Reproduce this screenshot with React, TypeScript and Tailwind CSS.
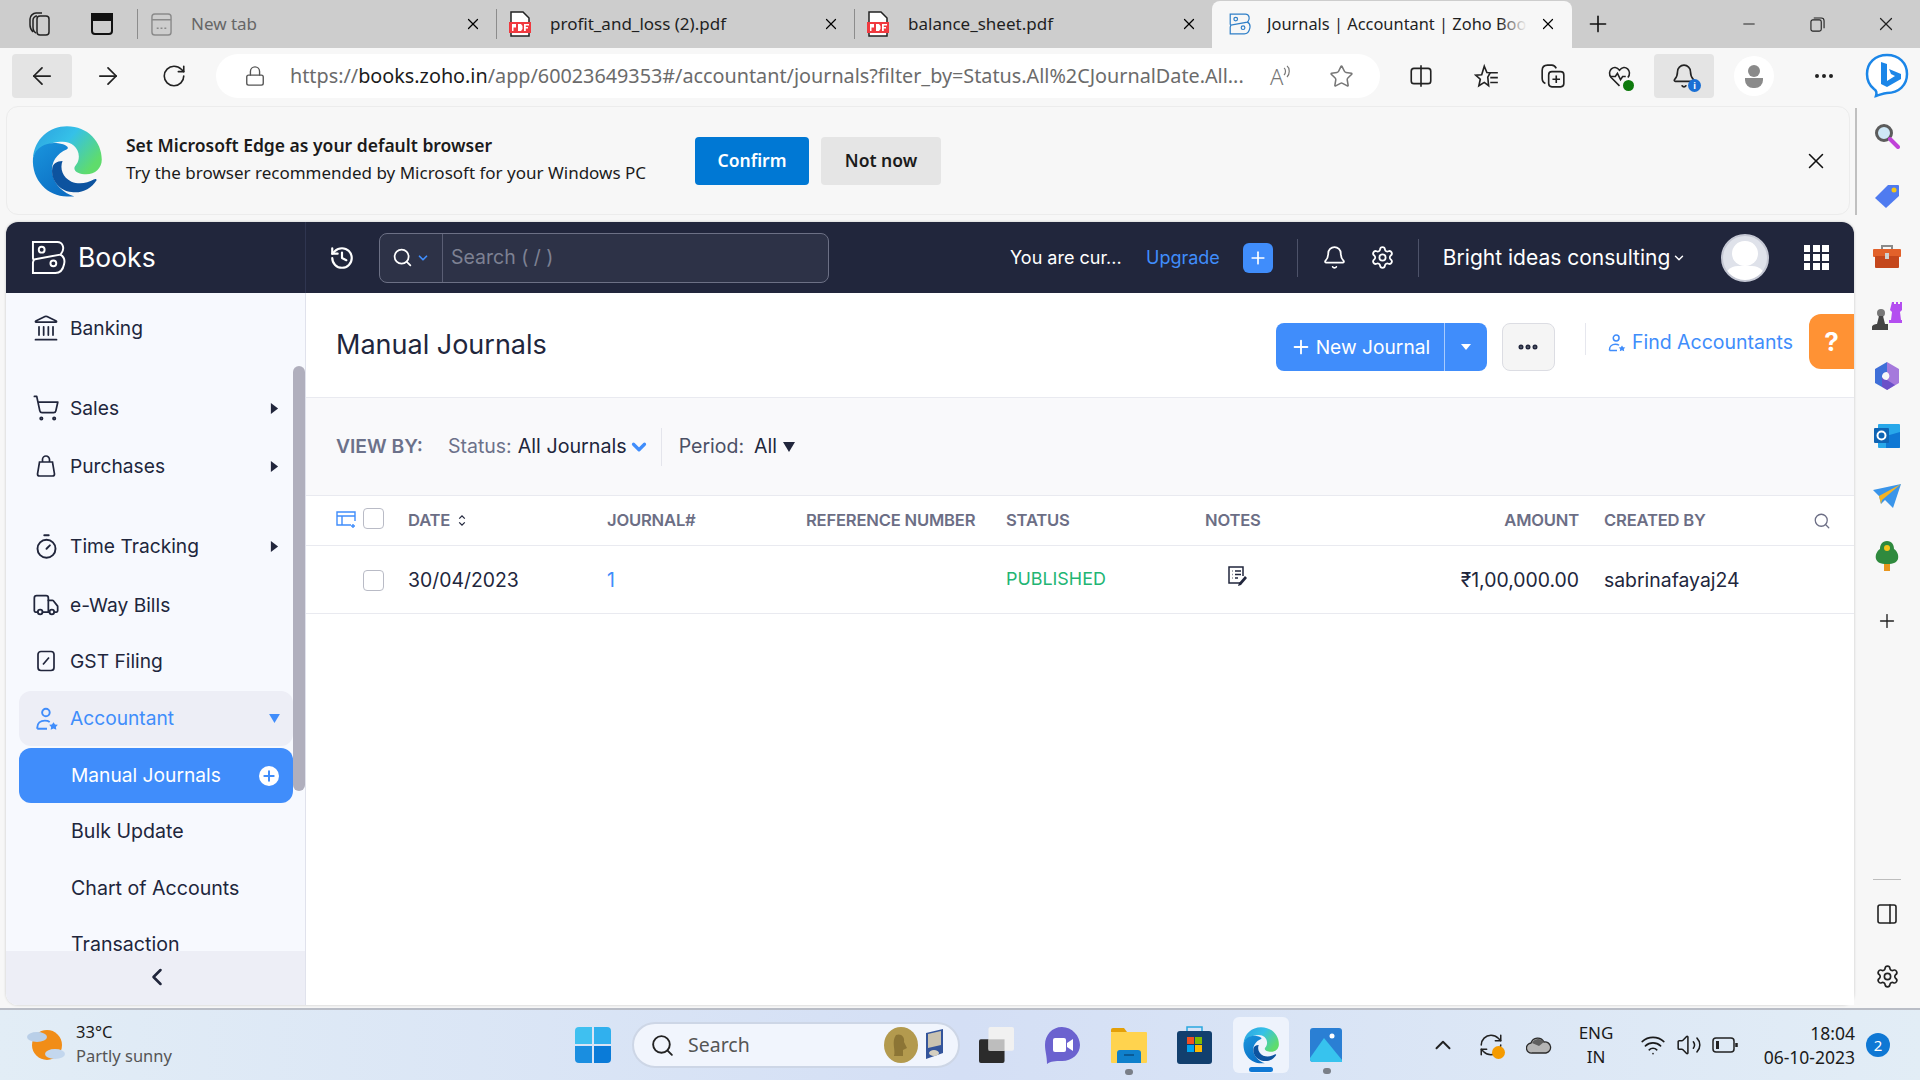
import React from "react";
import {
  ArrowLeft,
  ArrowRight,
  RotateCw,
  Lock,
  Star,
  Ellipsis,
  X,
  Plus,
  Minus,
  Landmark,
  ShoppingCart,
  Timer,
  Truck,
  Search,
  ChevronDown,
  ChevronLeft,
  ChevronUp,
  Bell,
  Settings,
  History,
  Wifi,
  Volume2,
  RefreshCw,
  PanelRight,
} from "lucide-react";

const EdgeLogo = ({ className }: { className: string }) => (
  <svg viewBox="0 0 100 100" className={className}>
    <defs>
      <linearGradient id="edgeTop" x1="0" y1="0" x2="1" y2="0.6">
        <stop offset="0" stopColor="#2b9fe0" />
        <stop offset="0.5" stopColor="#35c1e8" />
        <stop offset="1" stopColor="#5fdc6c" />
      </linearGradient>
      <linearGradient id="edgeMid" x1="0" y1="0" x2="0.6" y2="1">
        <stop offset="0" stopColor="#1a95dd" />
        <stop offset="1" stopColor="#0c6fc4" />
      </linearGradient>
    </defs>
    <path d="M4 46C6 20 26 3 50 3c28 0 47 21 47 45 0 12-9 20-21 20-8 0-16-3-16-8 0-4 6-6 6-16 0-12-10-20-22-20C26 24 8 34 4 46Z" fill="url(#edgeTop)" />
    <path d="M4 46c4-16 20-22 34-20 10 1 16 6 12 8-14 6-22 18-20 32 2 16 16 28 30 32h-10C24 98 2 76 4 46Z" fill="url(#edgeMid)" />
    <path d="M30 60c-2 16 10 30 26 32 14 2 26-4 34-16 0-2-2-2-4-1-8 5-20 7-30 3-12-6-16-18-12-28-8 0-13 4-14 10Z" fill="#0d539f" />
  </svg>
);

const BooksLogo = ({ className, color }: { className: string; color: string }) => (
  <svg viewBox="0 0 36 36" fill="none" stroke={color} strokeWidth="2" className={className}>
    <path d="M2 2h25c6 0 8 7 4 12l-1 1L3 20c-1 0-1-1-1-2V2Z" />
    <path d="M30 15c4 2 5 6 4 10-1 5-4 9-9 9H2V23l1-3" />
    <circle cx="11" cy="10" r="3" />
    <circle cx="23" cy="24" r="3" />
  </svg>
);

const PdfIcon = () => (
  <svg viewBox="0 0 22 26" className="w-[22px] h-[26px]">
    <path d="M2 1h12l6 6v18H2Z" fill="#fff" stroke="#222" strokeWidth="1.5" />
    <rect x="0" y="11" width="22" height="11" fill="#f0393f" />
    <path d="M3 13h4v3.5H4.5V20H3Zm6 0h3l1.5 2v3l-1.500 2H9Zm6 0h5v1.500h-3.200V16H19v1.500h-2.200V20H15Z" fill="#fff" />
  </svg>
);

const Tab = ({ w, icon, label, muted }: { w: string; icon: React.ReactNode; label: string; muted?: boolean }) => (
  <div className={`flex items-center h-full pl-3 pr-[14px] ${w}`}>
    <div className="w-[22px] flex justify-center shrink-0">{icon}</div>
    <span className={`ml-[19px] text-[17px] flex-1 whitespace-nowrap ${muted ? "text-[#666]" : "text-[#1f1f1f]"}`}>{label}</span>
    <X className="w-[18px] h-[18px] text-black" strokeWidth={1.6} />
  </div>
);

const TabSep = () => <div className="w-px h-[30px] bg-[#8c8c8c] shrink-0" />;

const ToolIcon = ({ children }: { children: React.ReactNode }) => (
  <div className="w-[66px] h-11 flex items-center justify-center shrink-0">{children}</div>
);

const RailIcon = ({ children }: { children: React.ReactNode }) => (
  <div className="h-[60px] flex items-center justify-center">{children}</div>
);

const Caret = () => (
  <svg viewBox="0 0 10 12" className="w-[9px] h-[11px]">
    <path d="M1 0l8 6-8 6Z" fill="#21263c" />
  </svg>
);

function GstIcon() {
  return (
    <svg viewBox="0 0 24 24" fill="none" stroke="currentColor" strokeWidth="1.700" className="w-[26px] h-[26px]">
      <rect x="4" y="2.500" width="16" height="19" rx="3" />
      <path d="M9 15.500l6-7M9.500 9h.01M14.500 15h.01" />
    </svg>
  );
}

function BagIcon() {
  return (
    <svg viewBox="0 0 24 24" fill="none" stroke="currentColor" strokeWidth="1.700" className="w-[26px] h-[26px]">
      <path d="M5.500 8h13l2 12a2 2 0 0 1-2 2H5.500a2 2 0 0 1-2-2Z" />
      <path d="M8.500 8V5.500a3.500 3.500 0 0 1 7 0V8" />
    </svg>
  );
}

const navRows = [
  { label: "Banking", icon: <Landmark className="shrink-0 w-[28px] h-[28px]" strokeWidth={1.5} />, cls: "mt-[6px]" },
  { label: "Sales", icon: <ShoppingCart className="shrink-0 w-[28px] h-[28px]" strokeWidth={1.5} />, cls: "mt-[24px]", caret: true },
  { label: "Purchases", icon: <BagIcon />, cls: "mt-[2px]", caret: true },
  { label: "Time Tracking", icon: <Timer className="shrink-0 w-[27px] h-[27px]" strokeWidth={1.7} />, cls: "mt-[24px]", caret: true },
  { label: "e-Way Bills", icon: <Truck className="shrink-0 w-[28px] h-[28px]" strokeWidth={1.5} />, cls: "mt-[3px]" },
  { label: "GST Filing", icon: <GstIcon />, cls: "mt-[0px]" },
];

const AccountantIcon = ({ className }: { className: string }) => (
  <svg viewBox="0 0 24 24" fill="none" stroke="#408dfb" strokeWidth="1.800" className={className}>
    <circle cx="11" cy="6" r="3.500" />
    <path d="M3 21v-1c0-4 3-6.500 7-6.500 2 0 3.500.5 4.500 1.200M3 21h9" />
    <path d="M18 15l1.400 2 2.600.4-1.800 1.900.4 2.700-2.600-1.200-2.600 1.200.4-2.700-1.800-1.900 2.600-.4Z" fill="#408dfb" stroke="none" />
  </svg>
);

const Sidebar = () => (
  <div className="relative w-[300px] shrink-0 flex flex-col bg-[#f7f9fe] border-r border-[#e0e2ec] rounded-bl-xl overflow-hidden">
    <div className="flex-1 overflow-hidden pt-[1px] text-[19.200px] text-[#21263c]">
      {navRows.map((r) => (
        <div key={r.label} className={`flex items-center h-[56px] pl-[28px] pr-[26px] ${r.cls}`}>
          <div className="w-6 flex justify-center">{r.icon}</div>
          <span className="ml-[12px] flex-1">{r.label}</span>
          {r.caret && <Caret />}
        </div>
      ))}
      <div className="flex items-center h-[55px] ml-[13px] mr-[12px] mt-[2px] pl-[15px] pr-[13px] rounded-xl bg-[#edeef6] text-[#408dfb]">
        <AccountantIcon className="w-[26px] h-[26px]" />
        <span className="ml-[10px] flex-1">Accountant</span>
        <svg viewBox="0 0 12 10" className="w-[11px] h-[9px]">
          <path d="M0 0h12L6 10Z" fill="#408dfb" />
        </svg>
      </div>
      <div className="flex items-center h-[55px] ml-[13px] mr-[12px] mt-[2px] pl-[52px] pr-[14px] rounded-xl bg-[#408dfb] text-white">
        <span className="flex-1">Manual Journals</span>
        <div className="w-5 h-5 rounded-full bg-white flex items-center justify-center">
          <Plus className="w-4 h-4 text-[#408dfb]" strokeWidth={3} />
        </div>
      </div>
      <div className="h-[56px] mt-[1px] pl-[65px] flex items-center text-[19.600px]">Bulk Update</div>
      <div className="h-[56px] mt-[1px] pl-[65px] flex items-center text-[19.600px]">Chart of Accounts</div>
      <div className="h-[56px] pl-[65px] flex items-center text-[19.600px]">Transaction</div>
    </div>
    <div className="h-[54px] shrink-0 bg-[#edeef6] flex items-center justify-center pl-[3px] pb-[2px] z-10">
      <ChevronLeft className="w-7 h-7 text-[#21263c]" strokeWidth={2.2} />
    </div>
    <div className="absolute right-0 top-[73px] w-[12px] h-[425px] rounded-full bg-[#b0afbd]" />
  </div>
);

const TopBar = () => (
  <div className="h-[71px] shrink-0 bg-[#21263c] rounded-t-xl flex items-center text-white">
    <div className="w-[300px] h-full shrink-0 flex items-center pl-[25px] border-r border-[#2f3550]">
      <BooksLogo className="w-[35px] h-[35px]" color="#fff" />
      <span className="ml-[12px] text-[26.500px] mt-[1px]">Books</span>
    </div>
    <History className="ml-[23px] w-[26px] h-[26px]" strokeWidth={2} />
    <div className="ml-[24px] w-[450px] h-[50px] rounded-lg border border-[#6c7085] bg-[#2d3247] flex items-center">
      <div className="w-[63px] h-full flex items-center justify-center gap-[3px] border-r border-[#5a5e74]">
        <Search className="w-[21px] h-[21px]" strokeWidth={2} />
        <ChevronDown className="w-[14px] h-[14px] text-[#408dfb]" strokeWidth={3} />
      </div>
      <span className="ml-[8px] text-[19.500px] text-[#7d8193]">Search ( / )</span>
    </div>
    <span className="ml-[181px] w-[136px] text-[18px] whitespace-nowrap">You are cur...</span>
    <span className="text-[18px] text-[#408dfb]">Upgrade</span>
    <div className="ml-[23px] w-[30px] h-[30px] rounded-md bg-[#408dfb] flex items-center justify-center">
      <Plus className="w-5 h-5 text-white" strokeWidth={2} />
    </div>
    <div className="ml-[24px] w-px h-[38px] bg-[#4d5269]" />
    <Bell className="ml-[24px] w-[25px] h-[25px]" strokeWidth={1.7} />
    <Settings className="ml-[23px] w-[25px] h-[25px]" strokeWidth={1.7} />
    <div className="ml-[23px] w-px h-[38px] bg-[#4d5269]" />
    <span className="ml-[24px] text-[21px] whitespace-nowrap w-[229px]">Bright ideas consulting</span>
    <ChevronDown className="w-[14px] h-[14px]" strokeWidth={2.5} />
    <div className="ml-[35px] w-[48px] h-[48px] rounded-full bg-[#dfe2ea] border-2 border-[#c5c8d4] overflow-hidden flex flex-col items-center">
      <div className="mt-[5px] w-[26px] h-[27px] rounded-full bg-white" />
      <div className="w-[42px] h-[14px] rounded-t-full bg-white" />
    </div>
    <div className="ml-[35px] grid grid-cols-3 gap-[2.500px] w-[25px]">
      {Array.from({ length: 9 }).map((_, i) => (
        <div key={i} className="w-[6.500px] h-[6.500px] bg-white" />
      ))}
    </div>
  </div>
);

const Checkbox = () => <div className="w-[21px] h-[21px] rounded border border-[#b9bbc6] bg-white shrink-0" />;

const tableCols = "grid grid-cols-[102px_199px_199px_200px_199px_195px_179px_25px_206px_1fr]";

const MainPanel = () => (
  <div className="flex-1 flex flex-col bg-white min-w-0 relative">
    <div className="h-[105px] shrink-0 flex items-center border-b border-[#e9eaf0] pl-[30px]">
      <h1 className="text-[27px] text-[#21263c] mt-[1px]">Manual Journals</h1>
      <div className="ml-auto flex items-center pr-[61px] mt-[4px]">
        <div className="flex h-12 w-[211px] rounded-lg bg-[#408dfb] text-white items-center text-[19.200px]">
          <div className="w-[169px] h-full flex items-center justify-center border-r border-[#a8cbfd]">
            <Plus className="w-[22px] h-[22px]" strokeWidth={2} />
            <span className="ml-[4px]">New Journal</span>
          </div>
          <div className="flex-1 flex justify-center">
            <svg viewBox="0 0 10 6" className="w-[10px] h-[6px]">
              <path d="M0 0h10L5 6Z" fill="#fff" />
            </svg>
          </div>
        </div>
        <div className="ml-[15px] w-[53px] h-12 rounded-lg border border-[#dcdde3] bg-[#f5f5f5] flex items-center justify-center">
          <Ellipsis className="w-6 h-6 text-[#21263c]" strokeWidth={3} />
        </div>
        <div className="ml-[30px] w-px h-[32px] bg-[#e6e7ee] mt-[-16px]" />
        <div className="ml-[21px] flex items-center text-[19.500px] text-[#408dfb] mt-[-9px]">
          <AccountantIcon className="w-[20px] h-[22px]" />
          <span className="ml-[5px] whitespace-nowrap">Find Accountants</span>
        </div>
      </div>
      <div className="absolute right-0 top-[21px] w-[45px] h-[55px] rounded-l-xl bg-[#ff9234] flex items-center justify-center text-white text-[26px] font-bold">?</div>
    </div>
    <div className="h-[98px] shrink-0 bg-[#f9f9fb] border-b border-[#e9eaf0] flex items-center pl-[30px] text-[19.500px]">
      <span className="font-semibold text-[#6c718a] text-[19.300px]">VIEW BY:</span>
      <span className="ml-[25px] text-[#6c718a]">Status:</span>
      <span className="ml-[6px] text-[19.700px] text-[#21263c]">All Journals</span>
      <ChevronDown className="ml-[1px] w-[22px] h-[22px] text-[#408dfb]" strokeWidth={3.5} />
      <div className="ml-[11px] w-px h-[38px] bg-[#e4e5ec]" />
      <span className="ml-[17px] text-[#4b5065]">Period:</span>
      <span className="ml-[10px] text-[#21263c]">All</span>
      <svg viewBox="0 0 12 10" className="ml-[6px] w-[12px] h-[10px]">
        <path d="M0 0h12L6 10Z" fill="#21263c" />
      </svg>
    </div>
    <div className={`${tableCols} h-[50px] shrink-0 items-center border-b border-[#e9eaf0] text-[16.600px] font-semibold text-[#6c6e85] tracking-[-0.2px]`}>
      <div className="flex items-center pl-[30px] mt-[-4px]">
        <svg viewBox="0 0 20 20" fill="none" stroke="#408dfb" strokeWidth="1.400" className="w-[20px] h-[20px]">
          <path d="M15 16H1V3h18v9M1 7h18M6 7v9M17 15v4M15 17h4" />
        </svg>
        <div className="ml-[7px]"><Checkbox /></div>
      </div>
      <div className="flex items-center">
        DATE
        <svg viewBox="0 0 8 14" fill="none" stroke="#21263c" strokeWidth="1.400" className="ml-[8px] w-[8px] h-[13px]">
          <path d="M1 5l3-3 3 3M1 9l3 3 3-3" />
        </svg>
      </div>
      <div>JOURNAL#</div>
      <div>REFERENCE NUMBER</div>
      <div>STATUS</div>
      <div>NOTES</div>
      <div className="text-right">AMOUNT</div>
      <div />
      <div>CREATED BY</div>
      <div className="pl-[3px]">
        <Search className="w-[18px] h-[18px] text-[#6c6e85]" strokeWidth={1.7} />
      </div>
    </div>
    <div className={`${tableCols} h-[68px] pt-[2px] shrink-0 items-center border-b border-[#e9eaf0] text-[19.400px] text-[#21263c]`}>
      <div className="pl-[57px]"><Checkbox /></div>
      <div>30/04/2023</div>
      <div className="text-[#408dfb]">1</div>
      <div />
      <div className="text-[#22b573] text-[17.900px] mt-[-2px]">PUBLISHED</div>
      <div className="pl-[22px] mt-[-10px]">
        <svg viewBox="0 0 20 22" fill="none" stroke="#21263c" strokeWidth="1.500" className="w-[20px] h-[22px]">
          <path d="M13 18H2V2h14v9M5 6h.5M8 6h6M5 9.500h.5M8 9.500h6M5 13h.5M8 13h3" />
          <path d="M18 11l-6 7-1 3 3-1 6-7Z" fill="#21263c" stroke="none" />
        </svg>
      </div>
      <div className="text-right whitespace-nowrap">₹1,00,000.00</div>
      <div />
      <div>sabrinafayaj24</div>
      <div />
    </div>
  </div>
);

const Taskbar = () => (
  <div className="h-[72px] shrink-0 flex items-center border-t-2 border-[#b9bdc6] bg-linear-to-r from-[#e2edf6] via-[#d4dff5] to-[#e2edf6] font-['Noto_Sans',sans-serif] text-[#1b1b1b]">
    <div className="w-[575px] shrink-0 flex items-center pl-[27px]">
      <svg viewBox="0 0 38 34" className="w-[38px] h-[34px]">
        <circle cx="20" cy="17" r="15" fill="#f18d17" />
        <ellipse cx="10" cy="9" rx="10" ry="5" fill="#b9cfe8" />
        <ellipse cx="28" cy="26" rx="10" ry="5" fill="#c3d7ee" />
      </svg>
      <div className="ml-[11px] text-[16.500px] leading-[24px] mt-[-2px]">
        <div>33°C</div>
        <div className="text-[#555]">Partly sunny</div>
      </div>
    </div>
    <div className="w-[36px] h-[36px] shrink-0 grid grid-cols-2 gap-[2px]">
      <div className="bg-[#3fc0f0] rounded-tl-sm" />
      <div className="bg-[#30b0ee] rounded-tr-sm" />
      <div className="bg-[#1a8ee0] rounded-bl-sm" />
      <div className="bg-[#0a7bd8] rounded-br-sm" />
    </div>
    <div className="ml-[21px] w-[328px] h-[46px] shrink-0 rounded-full bg-[#f1f5fd] border-2 border-[#cdd6e6] flex items-center pl-[16px]">
      <Search className="w-[25px] h-[25px] text-[#222]" strokeWidth={1.8} />
      <span className="ml-[13px] text-[19.500px] text-[#555]">Search</span>
      <svg viewBox="0 0 62 36" className="ml-auto mr-[12px] w-[62px] h-[36px]">
        <ellipse cx="17" cy="18" rx="17" ry="18" fill="#b39a4e" />
        <path d="M12 8c5-2 9 2 8 7l3 6-4 2v6H10c2-6-3-14 2-21Z" fill="#8c7535" />
        <path d="M42 6l17-4v24l-17 6Z" fill="#33549b" />
        <path d="M44 7l13-3v14l-13 3Z" fill="#c9c2b0" />
        <ellipse cx="50" cy="26" rx="5" ry="3" fill="#d5cfc0" />
      </svg>
    </div>
    <svg viewBox="0 0 37 38" className="ml-[19px] w-[35px] h-[36px] shrink-0">
      <rect x="0" y="13" width="27" height="25" rx="2" fill="#2b2b2b" />
      <rect x="10" y="0" width="27" height="25" rx="2" fill="#f1f1f1" />
      <rect x="10" y="13" width="17" height="12" fill="#bdbdbd" />
    </svg>
    <svg viewBox="0 0 35 38" className="ml-[31px] w-[35px] h-[38px] shrink-0">
      <path d="M17 1C7 1 0 9 0 19c0 6 2 11 2 19 4-3 8-3 15-3 10 0 18-7 18-16S27 1 17 1Z" fill="#6b62cf" />
      <rect x="8" y="12" width="13" height="14" rx="2" fill="#fff" />
      <path d="M22 17l6-4v12l-6-4Z" fill="#fff" />
    </svg>
    <div className="relative ml-[31px] shrink-0">
      <svg viewBox="0 0 36 36" className="w-[36px] h-[36px]">
        <path d="M0 3a2 2 0 0 1 2-2h11l3 4H0Z" fill="#e4a008" />
        <rect x="0" y="5" width="36" height="31" rx="1" fill="#ffd34e" />
        <path d="M6 36V26a3 3 0 0 1 3-3h18a3 3 0 0 1 3 3v10Z" fill="#0f80cc" />
        <rect x="13" y="27" width="10" height="2" fill="#0a5a96" />
      </svg>
      <div className="absolute left-[14px] top-[42px] w-[8px] h-[6px] rounded-full bg-[#7a7f88]" />
    </div>
    <svg viewBox="0 0 35 38" className="ml-[30px] w-[35px] h-[38px] shrink-0">
      <path d="M10 6V1h15v5" fill="none" stroke="#2aa8e0" strokeWidth="1.500" />
      <rect x="0" y="5" width="35" height="33" rx="3" fill="#123f6e" />
      <rect x="10" y="11" width="7" height="7" fill="#f25022" />
      <rect x="18" y="11" width="7" height="7" fill="#7fba00" />
      <rect x="10" y="19" width="7" height="7" fill="#00a4ef" />
      <rect x="18" y="19" width="7" height="7" fill="#ffb900" />
    </svg>
    <div className="relative ml-[21px] w-[56px] h-[56px] shrink-0 rounded-md bg-[#eef3fc] flex items-center justify-center">
      <EdgeLogo className="w-[38px] h-[38px]" />
      <div className="absolute left-[16px] bottom-[1px] w-[24px] h-[5px] rounded-full bg-[#0f78d4]" />
    </div>
    <div className="relative ml-[21px] shrink-0">
      <svg viewBox="0 0 32 34" className="w-[32px] h-[34px]">
        <rect width="32" height="34" rx="3" fill="#2a7fd4" />
        <circle cx="22" cy="8" r="2.500" fill="#fff" />
        <path d="M0 30l14-20 18 22v2H3a3 3 0 0 1-3-3Z" fill="#37c3ee" />
      </svg>
      <div className="absolute left-[13px] top-[40px] w-[8px] h-[6px] rounded-full bg-[#7a7f88]" />
    </div>
    <ChevronUp className="ml-[88px] w-[26px] h-[26px] shrink-0 text-[#222]" strokeWidth={1.8} />
    <div className="relative ml-[22px] w-[26px] shrink-0">
      <RefreshCw className="w-[26px] h-[26px] text-[#222]" strokeWidth={1.4} />
      <div className="absolute right-[-1px] bottom-[-1px] w-[13px] h-[13px] rounded-full bg-[#f59b00]" />
    </div>
    <svg viewBox="0 0 26 18" className="ml-[22px] w-[26px] h-[18px] shrink-0">
      <path d="M6 17a5 5 0 0 1-1-10 7 7 0 0 1 13-1 5.500 5.500 0 0 1 2 11Z" fill="#b5b5b5" stroke="#2b2b2b" strokeWidth="1.300" />
      <path d="M6 7a7 7 0 0 1 12-1l-5 4Z" fill="#5f5f5f" />
    </svg>
    <div className="ml-[22px] w-[44px] shrink-0 text-center text-[17px] leading-[24px] whitespace-nowrap">
      <div>ENG</div>
      <div>IN</div>
    </div>
    <Wifi className="ml-[22px] w-[26px] h-[26px] shrink-0" strokeWidth={1.5} />
    <Volume2 className="ml-[10px] w-[26px] h-[26px] shrink-0" strokeWidth={1.4} />
    <svg viewBox="0 0 26 16" fill="none" stroke="#222" strokeWidth="1.500" className="ml-[10px] w-[26px] h-[16px] shrink-0">
      <rect x="1" y="1" width="21" height="14" rx="3" />
      <rect x="4" y="4" width="3" height="8" fill="#222" stroke="none" />
      <path d="M24.500 6v4" strokeWidth="2.500" />
    </svg>
    <div className="ml-[12px] w-[105px] shrink-0 text-right text-[17.500px] leading-[24px] whitespace-nowrap">
      <div>18:04</div>
      <div>06-10-2023</div>
    </div>
    <div className="ml-[11px] w-[24px] h-[24px] shrink-0 rounded-full bg-[#0f78d4] text-white text-[15px] flex items-center justify-center">2</div>
  </div>
);

const RightRail = () => (
  <div className="flex-1 flex flex-col pt-[2px] pb-[3px] pr-[3px]">
    <RailIcon>
      <svg viewBox="0 0 26 26" fill="none" className="w-[26px] h-[26px]">
        <circle cx="10" cy="10" r="7.500" fill="#cfe8f7" stroke="#5c5c5c" strokeWidth="3" />
        <path d="M16 16l8 8" stroke="#c042d8" strokeWidth="4" strokeLinecap="round" />
      </svg>
    </RailIcon>
    <RailIcon>
      <svg viewBox="0 0 26 26" className="w-[26px] h-[26px]">
        <path d="M1 15L14 2h10a1 1 0 0 1 1 1v10L12 25Z" fill="#4f7bf0" />
        <circle cx="20" cy="7" r="2.500" fill="#f5c518" />
      </svg>
    </RailIcon>
    <RailIcon>
      <svg viewBox="0 0 28 24" className="w-[28px] h-[24px]">
        <path d="M9 6V2h10v4" fill="none" stroke="#8a8a8a" strokeWidth="2" />
        <rect y="5" width="28" height="8" rx="1" fill="#e2612a" />
        <rect x="2" y="12" width="24" height="12" rx="1" fill="#c4471c" />
        <rect x="12" y="9" width="4" height="6" fill="#cfcfcf" />
      </svg>
    </RailIcon>
    <RailIcon>
      <svg viewBox="0 0 30 28" className="w-[30px] h-[28px]">
        <path d="M20 0h2v2h2V0h2v2h2V0h2v8l-2 2 1 8h2v3H17v-3h2l1-8-2-2Z" fill="#b44ef0" />
        <circle cx="9" cy="11" r="4" fill="#777" />
        <path d="M7 14h4l2 8h3v6H0v-3c0-2 3-3 5-3Z" fill="#444" />
      </svg>
    </RailIcon>
    <RailIcon>
      <svg viewBox="0 0 26 28" className="w-[26px] h-[28px]">
        <path d="M13 0l12 7v14l-12 7V18a4.500 4.500 0 0 0 0-8Z" fill="#a579dc" />
        <path d="M13 0L1 7v14l7 4V14a5 5 0 0 1 5-4Z" fill="#3f6fd8" />
        <path d="M8 25l5 3 8-5-8-5a5 5 0 0 1-5-3Z" fill="#6b4fc8" />
      </svg>
    </RailIcon>
    <RailIcon>
      <svg viewBox="0 0 26 26" className="w-[26px] h-[26px]">
        <rect x="4" y="1" width="22" height="24" rx="1" fill="#28a8ea" />
        <path d="M12 13l14-4v15a1 1 0 0 1-1 1H12Z" fill="#0f78d4" />
        <rect y="5" width="15" height="15" rx="1" fill="#0f64b4" />
        <circle cx="7.500" cy="12.500" r="4" fill="none" stroke="#fff" strokeWidth="2" />
      </svg>
    </RailIcon>
    <RailIcon>
      <svg viewBox="0 0 28 24" className="w-[28px] h-[24px]">
        <path d="M0 6l28-6-8 24-8-8-4 4-2-8Z" fill="#3a95ea" />
        <path d="M6 12L28 0 9 16l-1 4Z" fill="#f5b324" />
      </svg>
    </RailIcon>
    <RailIcon>
      <svg viewBox="0 0 24 30" className="w-[24px] h-[30px]">
        <rect x="9" y="20" width="6" height="10" fill="#e8961e" />
        <path d="M12 0c5 0 7 4 7 8 3 2 5 6 4 10-1 3-4 5-11 5S2 21 1 18C0 14 2 10 5 8c0-4 2-8 7-8Z" fill="#2f8a3e" />
        <circle cx="12" cy="7" r="3" fill="#f5c518" />
      </svg>
    </RailIcon>
    <div className="mt-[5px]">
      <RailIcon>
        <Plus className="w-[22px] h-[22px] text-[#222]" strokeWidth={1.5} />
      </RailIcon>
    </div>
    <div className="mt-auto mx-[16px] h-px bg-[#bdbdbd]" />
    <div className="h-[67px] flex items-center justify-center">
      <PanelRight className="w-[24px] h-[24px] text-[#222]" strokeWidth={1.6} />
    </div>
    <div className="h-[58px] flex items-center justify-center">
      <Settings className="w-[25px] h-[25px] text-[#222]" strokeWidth={1.6} />
    </div>
  </div>
);

const App = () => {
  return (
    <div className="w-[1920px] h-[1080px] flex flex-col overflow-hidden bg-[#f7f7f7] font-['Noto_Sans',sans-serif]">
      {/* Tab strip */}
      <div className="h-12 shrink-0 bg-[#cdcdcd] flex items-center">
        <div className="w-[137px] flex items-center shrink-0">
          <svg viewBox="0 0 24 26" fill="none" stroke="#222" strokeWidth="1.500" className="ml-[28px] w-[24px] h-[26px]">
            <rect x="9" y="5" width="12" height="19" rx="3" />
            <path d="M5 21c-2-2-3-4-3-7V8c0-3 3-6 6-6h6M8 22c-2-1-3-3-3-6V9c0-2 2-4 4-4" />
          </svg>
          <svg viewBox="0 0 24 24" fill="none" stroke="#111" strokeWidth="2" className="ml-[38px] w-[24px] h-[24px]">
            <rect x="2" y="2" width="20" height="20" rx="3" />
            <rect x="2" y="2" width="20" height="6" fill="#111" />
          </svg>
        </div>
        <TabSep />
        <Tab
          w="w-[358px]"
          muted
          label="New tab"
          icon={
            <svg viewBox="0 0 22 24" fill="none" stroke="#8a8a8a" strokeWidth="1.500" className="w-[21px] h-[23px]">
              <rect x="1" y="1" width="20" height="22" rx="3" />
              <path d="M1 7h20M6 16h2M10 16h2M14 16h2" />
            </svg>
          }
        />
        <TabSep />
        <Tab w="w-[357px]" label="profit_and_loss (2).pdf" icon={<PdfIcon />} />
        <TabSep />
        <Tab w="w-[357px]" label="balance_sheet.pdf" icon={<PdfIcon />} />
        <div className="h-full w-[360px] shrink-0 mt-[2px] pb-[2px] bg-[#f7f7f7] rounded-t-lg flex items-center pl-[17px] pr-[15px]">
          <BooksLogo className="w-[22px] h-[22px]" color="#2f7fc8" />
          <span className="relative ml-[16px] flex-1 overflow-hidden whitespace-nowrap text-[16.400px] text-[#1f1f1f]">
            Journals | Accountant | Zoho Books
            <span className="absolute right-0 top-0 h-full w-[28px] bg-linear-to-r from-transparent to-[#f7f7f7]" />
          </span>
          <X className="ml-[12px] w-[18px] h-[18px] text-black" strokeWidth={1.6} />
        </div>
        <Plus className="ml-[13px] w-[26px] h-[26px] text-[#111]" strokeWidth={1.5} />
        <Minus className="ml-[129px] w-[18px] h-[18px] text-[#222]" strokeWidth={1.3} />
        <svg viewBox="0 0 16 16" fill="none" stroke="#222" strokeWidth="1.200" className="ml-[52px] w-[15px] h-[15px]">
          <rect x="1" y="3" width="11" height="12" rx="2" />
          <path d="M4 1h8a3 3 0 0 1 3 3v8" />
        </svg>
        <X className="ml-[50px] w-[22px] h-[22px] text-[#222]" strokeWidth={1.3} />
      </div>

      {/* Toolbar */}
      <div className="h-14 shrink-0 flex items-center pl-3 bg-[#f7f7f7]">
        <div className="w-[60px] h-11 bg-[#e4e4e4] rounded-sm flex items-center justify-center shrink-0">
          <ArrowLeft className="w-[28px] h-[28px] text-[#222]" strokeWidth={1.5} />
        </div>
        <div className="ml-[3px]" />
        <ToolIcon><ArrowRight className="w-[28px] h-[28px] text-[#222]" strokeWidth={1.5} /></ToolIcon>
        <ToolIcon><RotateCw className="w-[26px] h-[26px] text-[#222]" strokeWidth={1.5} /></ToolIcon>
        <div className="ml-[9px] w-[1164px] h-11 shrink-0 rounded-full bg-white flex items-center pl-[28px]">
          <Lock className="w-[22px] h-[22px] text-[#555] shrink-0" strokeWidth={1.5} />
          <span className="ml-[24px] text-[19.800px] text-[#6b6b6b] whitespace-nowrap w-[960px] overflow-hidden shrink-0">
            https://<span className="text-[#1b1b1b]">books.zoho.in</span>/app/60023649353#/accountant/journals?filter_by=Status.All%2CJournalDate.All...
          </span>
          <span className="ml-[20px] w-[32px] flex items-center text-[22px] font-light text-[#777] shrink-0">
            A
            <svg viewBox="0 0 8 14" fill="none" stroke="#777" strokeWidth="1.200" className="w-[8px] h-[14px] mt-[-8px]">
              <path d="M1 3c2 1 2 5 0 7M4 1c3 2 3 8 0 11" />
            </svg>
          </span>
          <Star className="ml-[27px] w-[25px] h-[25px] text-[#777] shrink-0" strokeWidth={1.5} />
        </div>
        <div className="ml-[8px]" />
        <ToolIcon>
          <svg viewBox="0 0 24 24" fill="none" stroke="#222" strokeWidth="1.500" className="w-[26px] h-[26px]">
            <rect x="3" y="5" width="18" height="14" rx="2.500" />
            <path d="M12 2v20" />
          </svg>
        </ToolIcon>
        <ToolIcon>
          <svg viewBox="0 0 24 24" fill="none" stroke="#222" strokeWidth="1.500" className="w-[26px] h-[26px]">
            <path d="M9.500 3l2.400 5.800 3.100.2-2.300 4 .8 8-4-3.100-5 3.100 1.300-6-4.300-3.800 5.600-.400Z" />
            <path d="M15 9h7M15 13.500h7M15 18h7" />
          </svg>
        </ToolIcon>
        <ToolIcon>
          <svg viewBox="0 0 24 24" fill="none" stroke="#222" strokeWidth="1.500" className="w-[26px] h-[26px]">
            <rect x="8" y="8" width="14" height="14" rx="3" />
            <path d="M15 11.500v7M11.500 15h7" />
            <path d="M5 19c-2-1-3-3-3-5V7c0-3 2-5 5-5h4c2 0 3 1 4 3" />
          </svg>
        </ToolIcon>
        <ToolIcon>
          <div className="relative">
            <svg viewBox="0 0 24 24" fill="none" stroke="#222" strokeWidth="1.500" className="w-[25px] h-[25px]">
              <path d="M12 21L4 13c-5-6 3-14 8-7 5-7 13 1 8 7" />
              <path d="M3 12h5l2-3 3 6 2-3h3" />
            </svg>
            <div className="absolute right-[-2px] bottom-[-2px] w-[11px] h-[11px] rounded-full bg-[#0e7a0d]" />
          </div>
        </ToolIcon>
        <div className="ml-[2px] w-[60px] h-11 bg-[#e4e4e4] rounded-sm flex items-center justify-center shrink-0">
          <div className="relative">
            <Bell className="w-[26px] h-[26px] text-[#222]" strokeWidth={1.5} />
            <div className="absolute right-[-4px] bottom-[-3px] w-[13px] h-[13px] rounded-full bg-[#1a6fd4] text-white text-[9px] leading-[13px] text-center font-bold">i</div>
          </div>
        </div>
        <div className="ml-[20px] w-[40px] h-[40px] rounded-full bg-white flex flex-col items-center justify-center shrink-0">
          <div className="w-[12px] h-[12px] rounded-full bg-[#8a8a8a]" />
          <div className="mt-[1px] w-[18px] h-[10px] rounded-b-lg bg-[#8a8a8a]" />
        </div>
        <Ellipsis className="ml-[38px] w-[24px] h-[24px] text-[#222]" strokeWidth={2} />
        <svg viewBox="0 0 44 46" className="ml-[29px] w-[44px] h-[46px] shrink-0">
          <path d="M22 2c12 0 20 8 20 19s-8 19-20 19c-4 0-7 2-11 3 1-3 1-5-2-7C4 32 2 27 2 21 2 10 10 2 22 2Z" fill="#fff" stroke="#1b86e8" strokeWidth="2.500" />
          <path d="M16 9l6 2v17l8-5-4-2-2-5 12 5v5l-14 8-6-3Z" fill="#1b86e8" />
        </svg>
      </div>

      {/* Content */}
      <div className="flex-1 flex min-h-0">
        <div className="w-[1857px] shrink-0 flex flex-col pl-[6px]">
          <div className="flex shrink-0 pt-[2px]">
            <div className="w-[1844px] h-[109px] rounded-xl bg-[#f7f7f7] border border-[#ececec] flex items-center pl-[23px]">
              <EdgeLogo className="w-[74px] h-[74px]" />
              <div className="ml-[22px] w-[569px] text-[#1b1b1b] mt-[-3px]">
                <div className="text-[17.500px] font-semibold leading-[27px]">Set Microsoft Edge as your default browser</div>
                <div className="text-[17px] leading-[27px]">Try the browser recommended by Microsoft for your Windows PC</div>
              </div>
              <button className="w-[114px] h-[48px] rounded-sm bg-[#0078d4] text-white text-[17.500px] font-semibold">Confirm</button>
              <button className="ml-[12px] w-[120px] h-[48px] rounded-sm bg-[#e5e5e5] text-[#1b1b1b] text-[17.500px] font-semibold">Not now</button>
              <X className="ml-auto mr-[20px] w-[26px] h-[26px] text-[#111]" strokeWidth={1.4} />
            </div>
            <div className="ml-[5px] w-[2px] mt-[2px] bg-[#c0c0c0]" />
          </div>
          <div className="mt-[7px] w-[1848px] h-[783px] flex flex-col font-['Inter',sans-serif] rounded-xl shadow-[0_0_3px_rgba(0,0,0,0.2)]">
            <TopBar />
            <div className="flex-1 flex min-h-0">
              <Sidebar />
              <MainPanel />
            </div>
          </div>
        </div>
        <RightRail />
      </div>

      <Taskbar />
    </div>
  );
};

export default App;
